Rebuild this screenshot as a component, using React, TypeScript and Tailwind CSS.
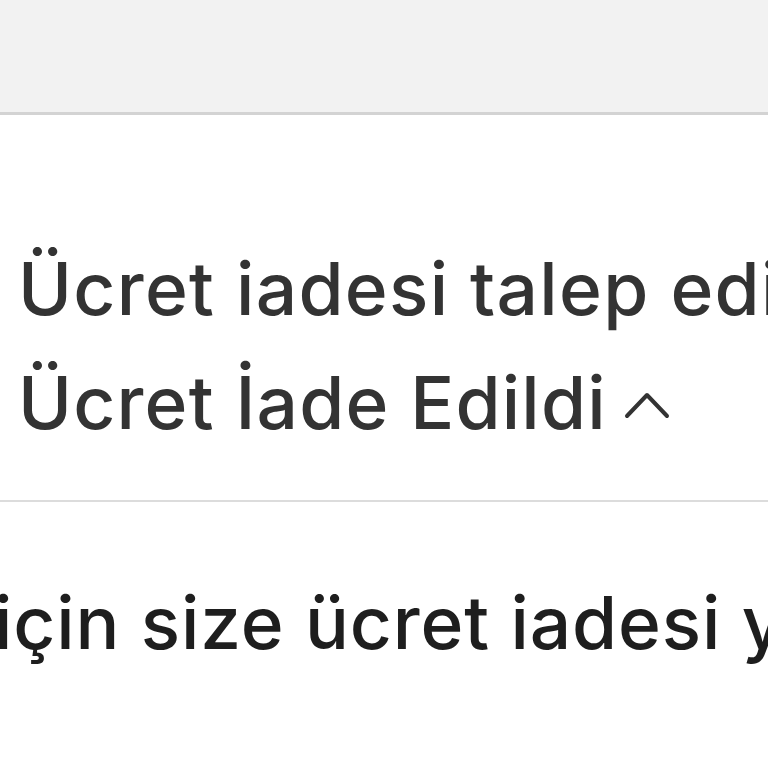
import React from "react";

export default function App() {
  return (
    <div
      className="w-[768px] h-[768px] overflow-hidden bg-white"
      style={{ fontFamily: 'Inter, "Liberation Sans", Arial, sans-serif' }}
    >
      <div className="h-[115px] bg-[#f2f2f2] border-b-[3px] border-[#d3d3d3]" />
      <div className="pt-[117px] pb-[40px] border-b-[2px] border-[#dcdcdc] pl-[18px]">
        <div className="text-[73px] font-medium leading-[114px] tracking-[1.3px] text-[#333333] whitespace-nowrap">
          Ücret iadesi talep edildi
        </div>
        <div className="text-[73px] font-medium leading-[114px] tracking-[1.2px] text-[#333333] whitespace-nowrap">
          Ücret İade Edildi
          <svg
            width="46"
            height="28"
            viewBox="0 0 46 28"
            className="inline-block align-[10px] ml-[17px]"
          >
            <polyline
              points="3,25 23,4 43,25"
              fill="none"
              stroke="#333333"
              strokeWidth="4"
              strokeLinecap="round"
              strokeLinejoin="round"
            />
          </svg>
        </div>
      </div>
      <div className="pt-[64px] ml-[-6px]">
        <div className="text-[73px] font-medium leading-[114px] tracking-[0.9px] text-[#1e1e1e] whitespace-nowrap">
          için size ücret iadesi yapılacak
        </div>
      </div>
    </div>
  );
}
